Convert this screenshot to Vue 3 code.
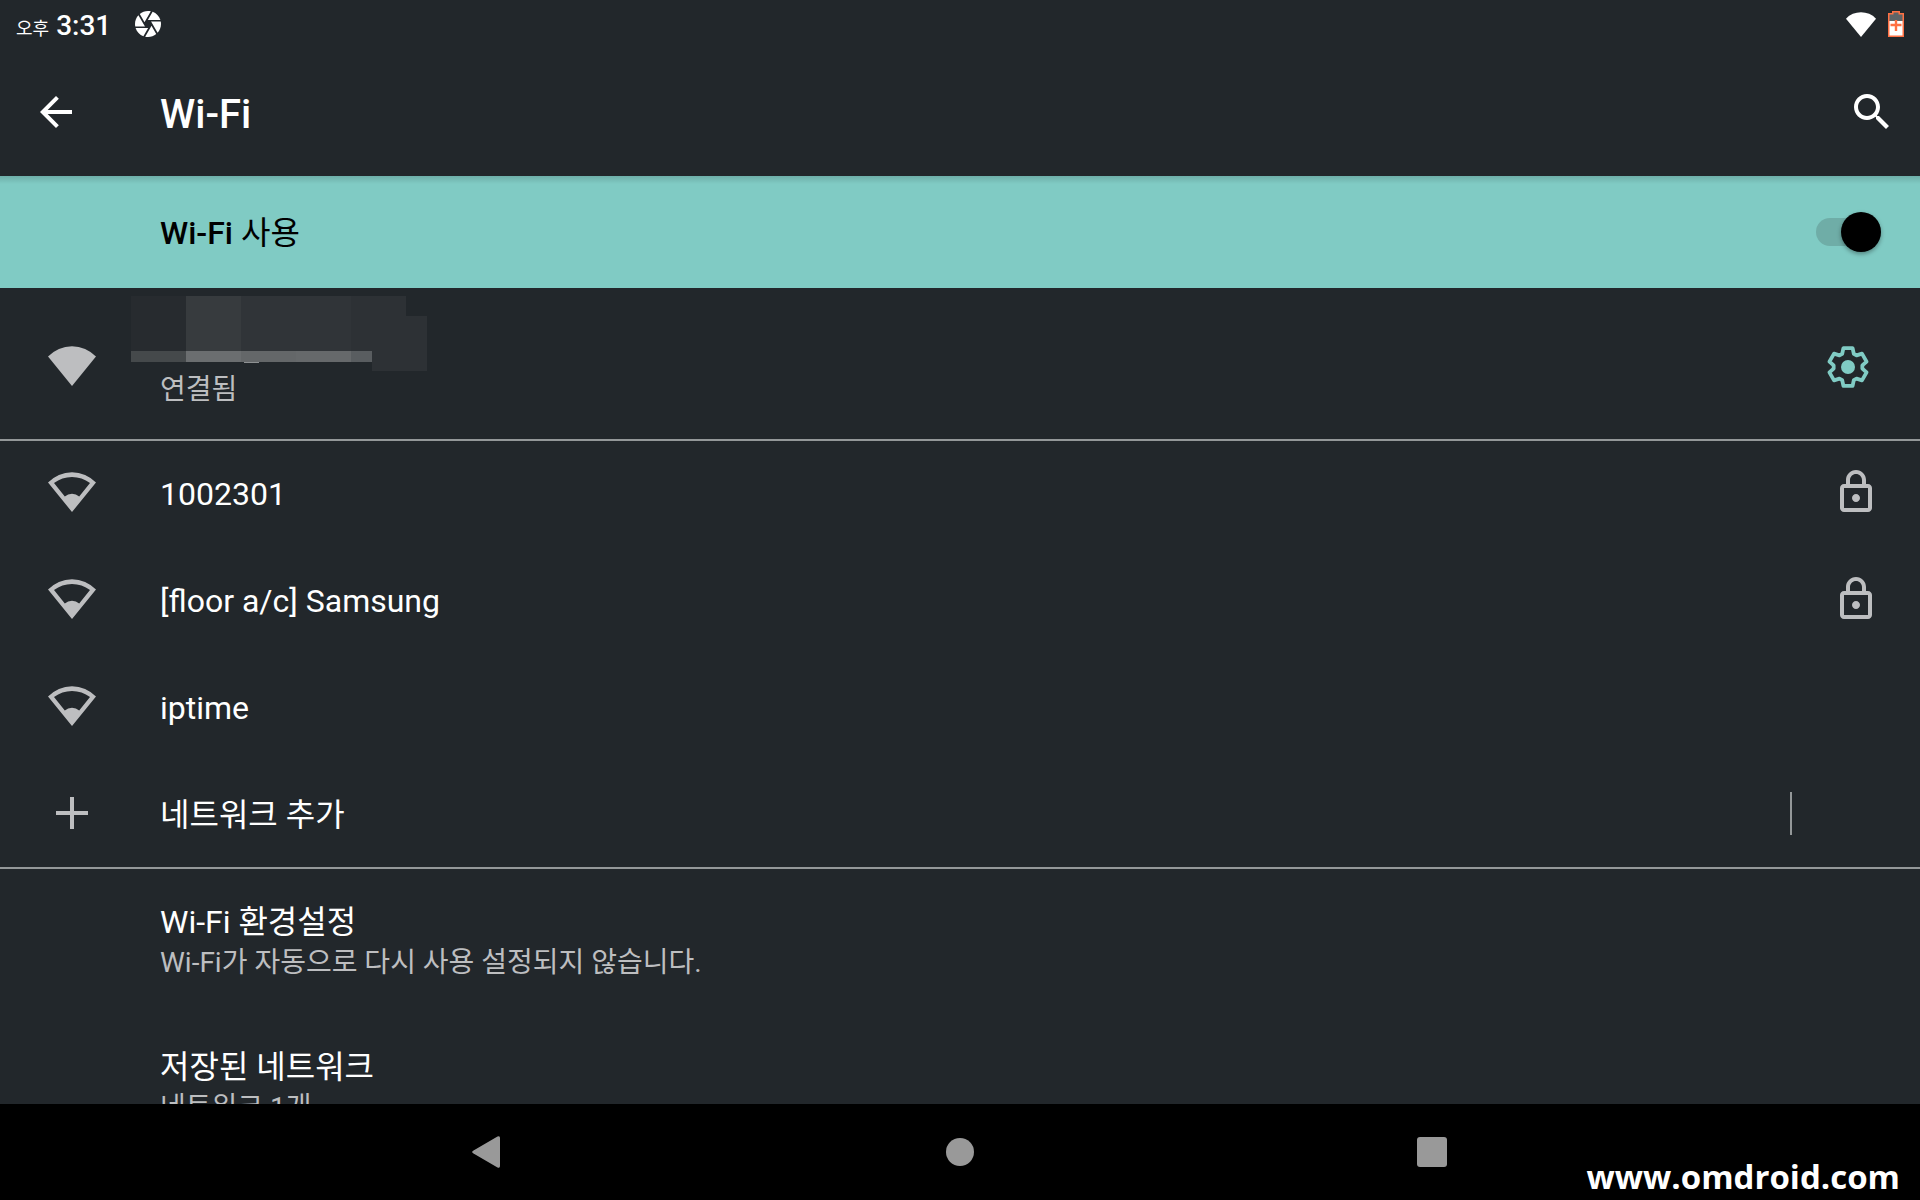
<template>
  <div class="screen">
    <!-- Status bar -->
    <div class="status-bar">
      <div class="clock"><span class="meridiem">오후</span><span class="time">3:31</span></div>
      <svg class="camera-icon" viewBox="2 2 20 20">
        <path d="M9.4 10.5l4.77-8.26C13.47 2.09 12.75 2 12 2c-2.4 0-4.6.85-6.32 2.25l3.66 6.35.06-.1zM21.54 9c-.92-2.92-3.15-5.26-6-6.34L11.88 9h9.66zm.26 1h-7.49l.29.5 4.76 8.25C21 16.97 22 14.61 22 12c0-.69-.07-1.35-.2-2zM8.54 12l-3.9-6.75C3.01 7.03 2 9.39 2 12c0 .69.07 1.35.2 2h7.49l-1.15-2zm-6.08 3c.92 2.92 3.15 5.26 6 6.34L12.12 15H2.46zm11.27 0l-3.9 6.76c.7.15 1.42.24 2.17.24 2.4 0 4.6-.85 6.32-2.25l-3.66-6.35-.93 1.6z" />
      </svg>
      <div class="status-right">
        <svg class="signal-icon" viewBox="0 2 24 20">
          <path :d="fanFull" />
        </svg>
        <svg class="battery-icon" viewBox="0 0 16 26">
          <path d="M1 3h4V1h6v2h4v22H1z" fill="#5f6467" />
          <path d="M1 10h14v15H1z" fill="#fff" />
          <path d="M.75 2.75h4v-2h6.5v2h4v22.5H.75z" fill="none" stroke="#ff7043" stroke-width="1.5" />
          <path d="M8 9v11M2.5 14h11" stroke="#ff7043" stroke-width="2.4" />
        </svg>
      </div>
    </div>

    <!-- App bar -->
    <header class="app-bar">
      <button class="icon-button" aria-label="뒤로">
        <svg class="icon" viewBox="0 0 24 24"><path d="M20 11H7.83l5.59-5.59L12 4l-8 8 8 8 1.41-1.41L7.83 13H20v-2z" /></svg>
      </button>
      <h1 class="title">Wi-Fi</h1>
      <button class="icon-button" aria-label="검색">
        <svg class="icon" viewBox="0 0 24 24"><path d="M15.5 14h-.79l-.28-.27C15.41 12.59 16 11.11 16 9.5 16 5.91 13.09 3 9.5 3S3 5.91 3 9.5 5.91 16 9.5 16c1.61 0 3.09-.59 4.23-1.57l.27.28v.79l5 4.99L20.49 19l-4.99-5zm-6 0C7.01 14 5 11.99 5 9.5S7.01 5 9.5 5 14 7.01 14 9.5 11.99 14 9.5 14z" /></svg>
      </button>
    </header>

    <!-- Master switch -->
    <div class="switch-bar">
      <label class="switch-label" for="wifi-switch">Wi-Fi <span class="regular">사용</span></label>
      <input id="wifi-switch" v-model="wifiOn" class="switch" type="checkbox" role="switch" />
    </div>

    <main class="content">
      <!-- Connected network, name hidden -->
      <section class="connected">
        <svg class="icon lead" viewBox="0 0 24 24"><path :d="fanFull" /></svg>
        <div class="texts">
          <div class="item-title hidden-name">
            <svg class="mosaic" viewBox="0 0 296 75">
              <rect v-for="(b, i) in blocks" :key="i" :x="b[0]" :y="b[1]" :width="b[2]" :height="b[3]" :fill="b[4]" />
            </svg>
          </div>
          <div class="item-summary">연결됨</div>
        </div>
        <button class="icon-button gear" aria-label="설정">
          <svg class="icon" viewBox="0 0 24 24">
            <polygon
              points="9.1,5.4 9.7,2.6 14.3,2.6 14.9,5.4 16.27,6.19 18.99,5.31 21.29,9.29 19.17,11.21 19.17,12.79 21.29,14.71 18.99,18.69 16.27,17.81 14.9,18.6 14.3,21.4 9.7,21.4 9.1,18.6 7.73,17.81 5.01,18.69 2.71,14.71 4.83,12.79 4.83,11.21 2.71,9.29 5.01,5.31 7.73,6.19"
              fill="none"
              stroke="currentColor"
              stroke-width="1.9"
              stroke-linejoin="round"
            />
            <circle cx="12" cy="12" r="3.5" />
          </svg>
        </button>
      </section>

      <!-- Available networks -->
      <section class="group">
        <button v-for="net in networks" :key="net.name" class="network">
          <svg class="icon lead" viewBox="0 0 24 24"><path fill-rule="evenodd" :d="fanFull + fanHole" /></svg>
          <span class="network-name">{{ net.name }}</span>
          <svg v-if="net.locked" class="icon lock" viewBox="0 0 24 24">
            <path d="M18 8h-1V6c0-2.76-2.24-5-5-5S7 3.24 7 6v2H6c-1.1 0-2 .9-2 2v10c0 1.1.9 2 2 2h12c1.1 0 2-.9 2-2V10c0-1.1-.9-2-2-2zM9 6c0-1.66 1.34-3 3-3s3 1.34 3 3v2H9V6zm9 14H6V10h12v10zm-6-3c1.1 0 2-.9 2-2s-.9-2-2-2-2 .9-2 2 .9 2 2 2z" />
          </svg>
        </button>
        <button class="network">
          <svg class="icon lead" viewBox="0 0 24 24"><path d="M20 13h-7v7h-2v-7H4v-2h7V4h2v7h7z" /></svg>
          <span class="network-name">네트워크 추가</span>
          <span class="separator"></span>
        </button>
      </section>

      <!-- Preferences -->
      <section class="group">
        <a v-for="pref in prefs" :key="pref.title" class="pref" href="#">
          <span class="item-title">{{ pref.title }}</span>
          <span class="item-summary">{{ pref.summary }}</span>
        </a>
      </section>
    </main>

    <!-- Navigation bar -->
    <nav class="nav-bar">
      <button class="nav-button" aria-label="뒤로">
        <svg class="nav-icon" viewBox="0 0 36 36"><path d="M3.5 16.5L27.5 2.6Q30 1.3 30 4v28q0 2.7-2.5 1.4L3.5 19.5Q.8 18 3.5 16.5z" /></svg>
      </button>
      <button class="nav-button" aria-label="홈">
        <svg class="nav-icon" viewBox="0 0 36 36"><circle cx="18" cy="18" r="14" /></svg>
      </button>
      <button class="nav-button" aria-label="최근 앱">
        <svg class="nav-icon" viewBox="0 0 36 36"><rect x="3" y="3" width="30" height="30" rx="3" /></svg>
      </button>
      <span class="watermark">www.omdroid.com</span>
    </nav>
  </div>
</template>

<script setup>
import { ref } from 'vue'

const wifiOn = ref(true)

// wifi fan, and the hole that turns it into the weak-signal version
const fanFull = 'M12 22L0 7.3A16.5 16.5 0 0 1 24 7.3z'
const fanHole = 'M3 7.5A15 15 0 0 1 21 7.5L15.6 14.2A5.5 5.5 0 0 0 8.4 14.2z'

const networks = [
  { name: '1002301', locked: true },
  { name: '[floor a/c] Samsung', locked: true },
  { name: 'iptime', locked: false }
]

const prefs = [
  { title: 'Wi-Fi 환경설정', summary: 'Wi-Fi가 자동으로 다시 사용 설정되지 않습니다.' },
  { title: '저장된 네트워크', summary: '네트워크 1개' }
]

// x, y, width, height, colour
const blocks = [
  [0, 0, 55, 55, '#272b2f'],
  [55, 0, 55, 55, '#373b3e'],
  [110, 0, 110, 55, '#303438'],
  [220, 0, 55, 55, '#2d3135'],
  [0, 55, 55, 11, '#45494b'],
  [55, 55, 55, 11, '#6b6e70'],
  [110, 55, 55, 11, '#646769'],
  [165, 55, 55, 11, '#66696b'],
  [220, 55, 21, 11, '#595d60'],
  [113, 66, 15, 1, '#8d9092'],
  [241, 20, 55, 55, '#2d3135']
]
</script>

<style>
body {
  background: #22272b;
}
</style>

<style scoped>
.screen {
  height: 100vh;
  display: flex;
  flex-direction: column;
  overflow: hidden;
  background: #22272b;
  color: #fff;
  font-family: Roboto, 'Noto Sans CJK KR', sans-serif;
}

button {
  border: none;
  padding: 0;
  background: none;
  color: inherit;
  font: inherit;
  text-align: left;
  cursor: pointer;
}

.icon {
  display: block;
  flex: none;
  width: 48px;
  height: 48px;
  fill: currentColor;
}

/* Status bar */
.status-bar {
  flex: none;
  height: 48px;
  padding: 0 16px;
  display: flex;
  align-items: center;
}

.clock {
  display: flex;
  align-items: baseline;
  gap: 7px;
  width: 119px;
  line-height: 32px;
  padding-top: 6px;
}

.meridiem {
  font-size: 18px;
}

.time {
  font-size: 28px;
  font-weight: 500;
}

.camera-icon {
  width: 26px;
  height: 26px;
  fill: #fff;
}

.status-right {
  margin-left: auto;
  display: flex;
  align-items: center;
  gap: 12px;
}

.signal-icon {
  width: 30px;
  height: 25px;
  fill: #fff;
}

.battery-icon {
  width: 16px;
  height: 26px;
}

/* App bar */
.app-bar {
  flex: none;
  height: 128px;
  padding: 0 24px 0 32px;
  display: flex;
  align-items: center;
}

.title {
  flex: 1;
  margin: 0;
  padding: 6px 0 0 80px;
  font-size: 40px;
  line-height: 48px;
  font-weight: 500;
}

/* Switch bar */
.switch-bar {
  flex: none;
  height: 112px;
  padding: 0 39px 0 160px;
  display: flex;
  align-items: center;
  justify-content: space-between;
  background: linear-gradient(rgba(0, 0, 0, 0.14), rgba(0, 0, 0, 0) 8px) #80cbc4;
  color: #000;
}

.switch-label {
  padding-top: 2px;
  font-size: 32px;
  line-height: 44px;
  font-weight: 500;
}

.regular {
  font-weight: 400;
}

.switch {
  appearance: none;
  flex: none;
  display: flex;
  align-items: center;
  width: 65px;
  height: 28px;
  margin: 0;
  border-radius: 14px;
  background: #6fada7;
  cursor: pointer;
}

.switch::before {
  content: '';
  width: 40px;
  height: 40px;
  border-radius: 50%;
  background: #000;
  box-shadow: 0 2px 4px rgba(0, 0, 0, 0.35);
}

.switch:checked {
  justify-content: flex-end;
}

/* List */
.content {
  flex: 1;
  min-height: 0;
  overflow: hidden;
}

.lead {
  margin: 0 64px 0 48px;
  color: #bdbec0;
}

.item-title {
  display: block;
  font-size: 32px;
  line-height: 46px;
}

.item-summary {
  display: block;
  font-size: 28px;
  line-height: 36px;
  color: #bdbec0;
}

.connected {
  height: 151px;
  padding: 5px 48px 0 0;
  box-sizing: border-box;
  display: flex;
  align-items: center;
}

.texts {
  flex: 1;
  padding-top: 2px;
}

.hidden-name {
  position: relative;
  height: 46px;
}

.mosaic {
  position: absolute;
  left: -29px;
  bottom: 1px;
  width: 296px;
  height: 75px;
}

.gear {
  padding-top: 2px;
  color: #80cbc4;
}

.group {
  box-shadow: inset 0 2px #949899;
}

.network {
  display: flex;
  align-items: center;
  width: 100%;
  height: 107px;
  padding-bottom: 1px;
  box-sizing: border-box;
}

.network-name {
  flex: 1;
  padding-top: 4px;
  font-size: 32px;
  line-height: 44px;
}

.lock {
  margin-right: 40px;
  color: #bdbec0;
}

.separator {
  width: 2px;
  height: 43px;
  margin-right: 128px;
  background: #949899;
}

.pref {
  display: block;
  height: 145px;
  padding: 32px 160px 0;
  box-sizing: border-box;
  color: inherit;
  text-decoration: none;
}

/* Navigation bar */
.nav-bar {
  position: relative;
  flex: none;
  height: 96px;
  padding: 0 252px;
  display: flex;
  background: #000;
}

.nav-button {
  flex: 1;
  display: flex;
  align-items: center;
  justify-content: center;
}

.nav-icon {
  width: 36px;
  height: 36px;
  fill: #999;
}

.watermark {
  position: absolute;
  right: 20px;
  bottom: 0;
  font-family: 'Open Sans', 'Noto Sans', sans-serif;
  font-size: 33px;
  line-height: 46px;
  font-weight: 700;
}
</style>
